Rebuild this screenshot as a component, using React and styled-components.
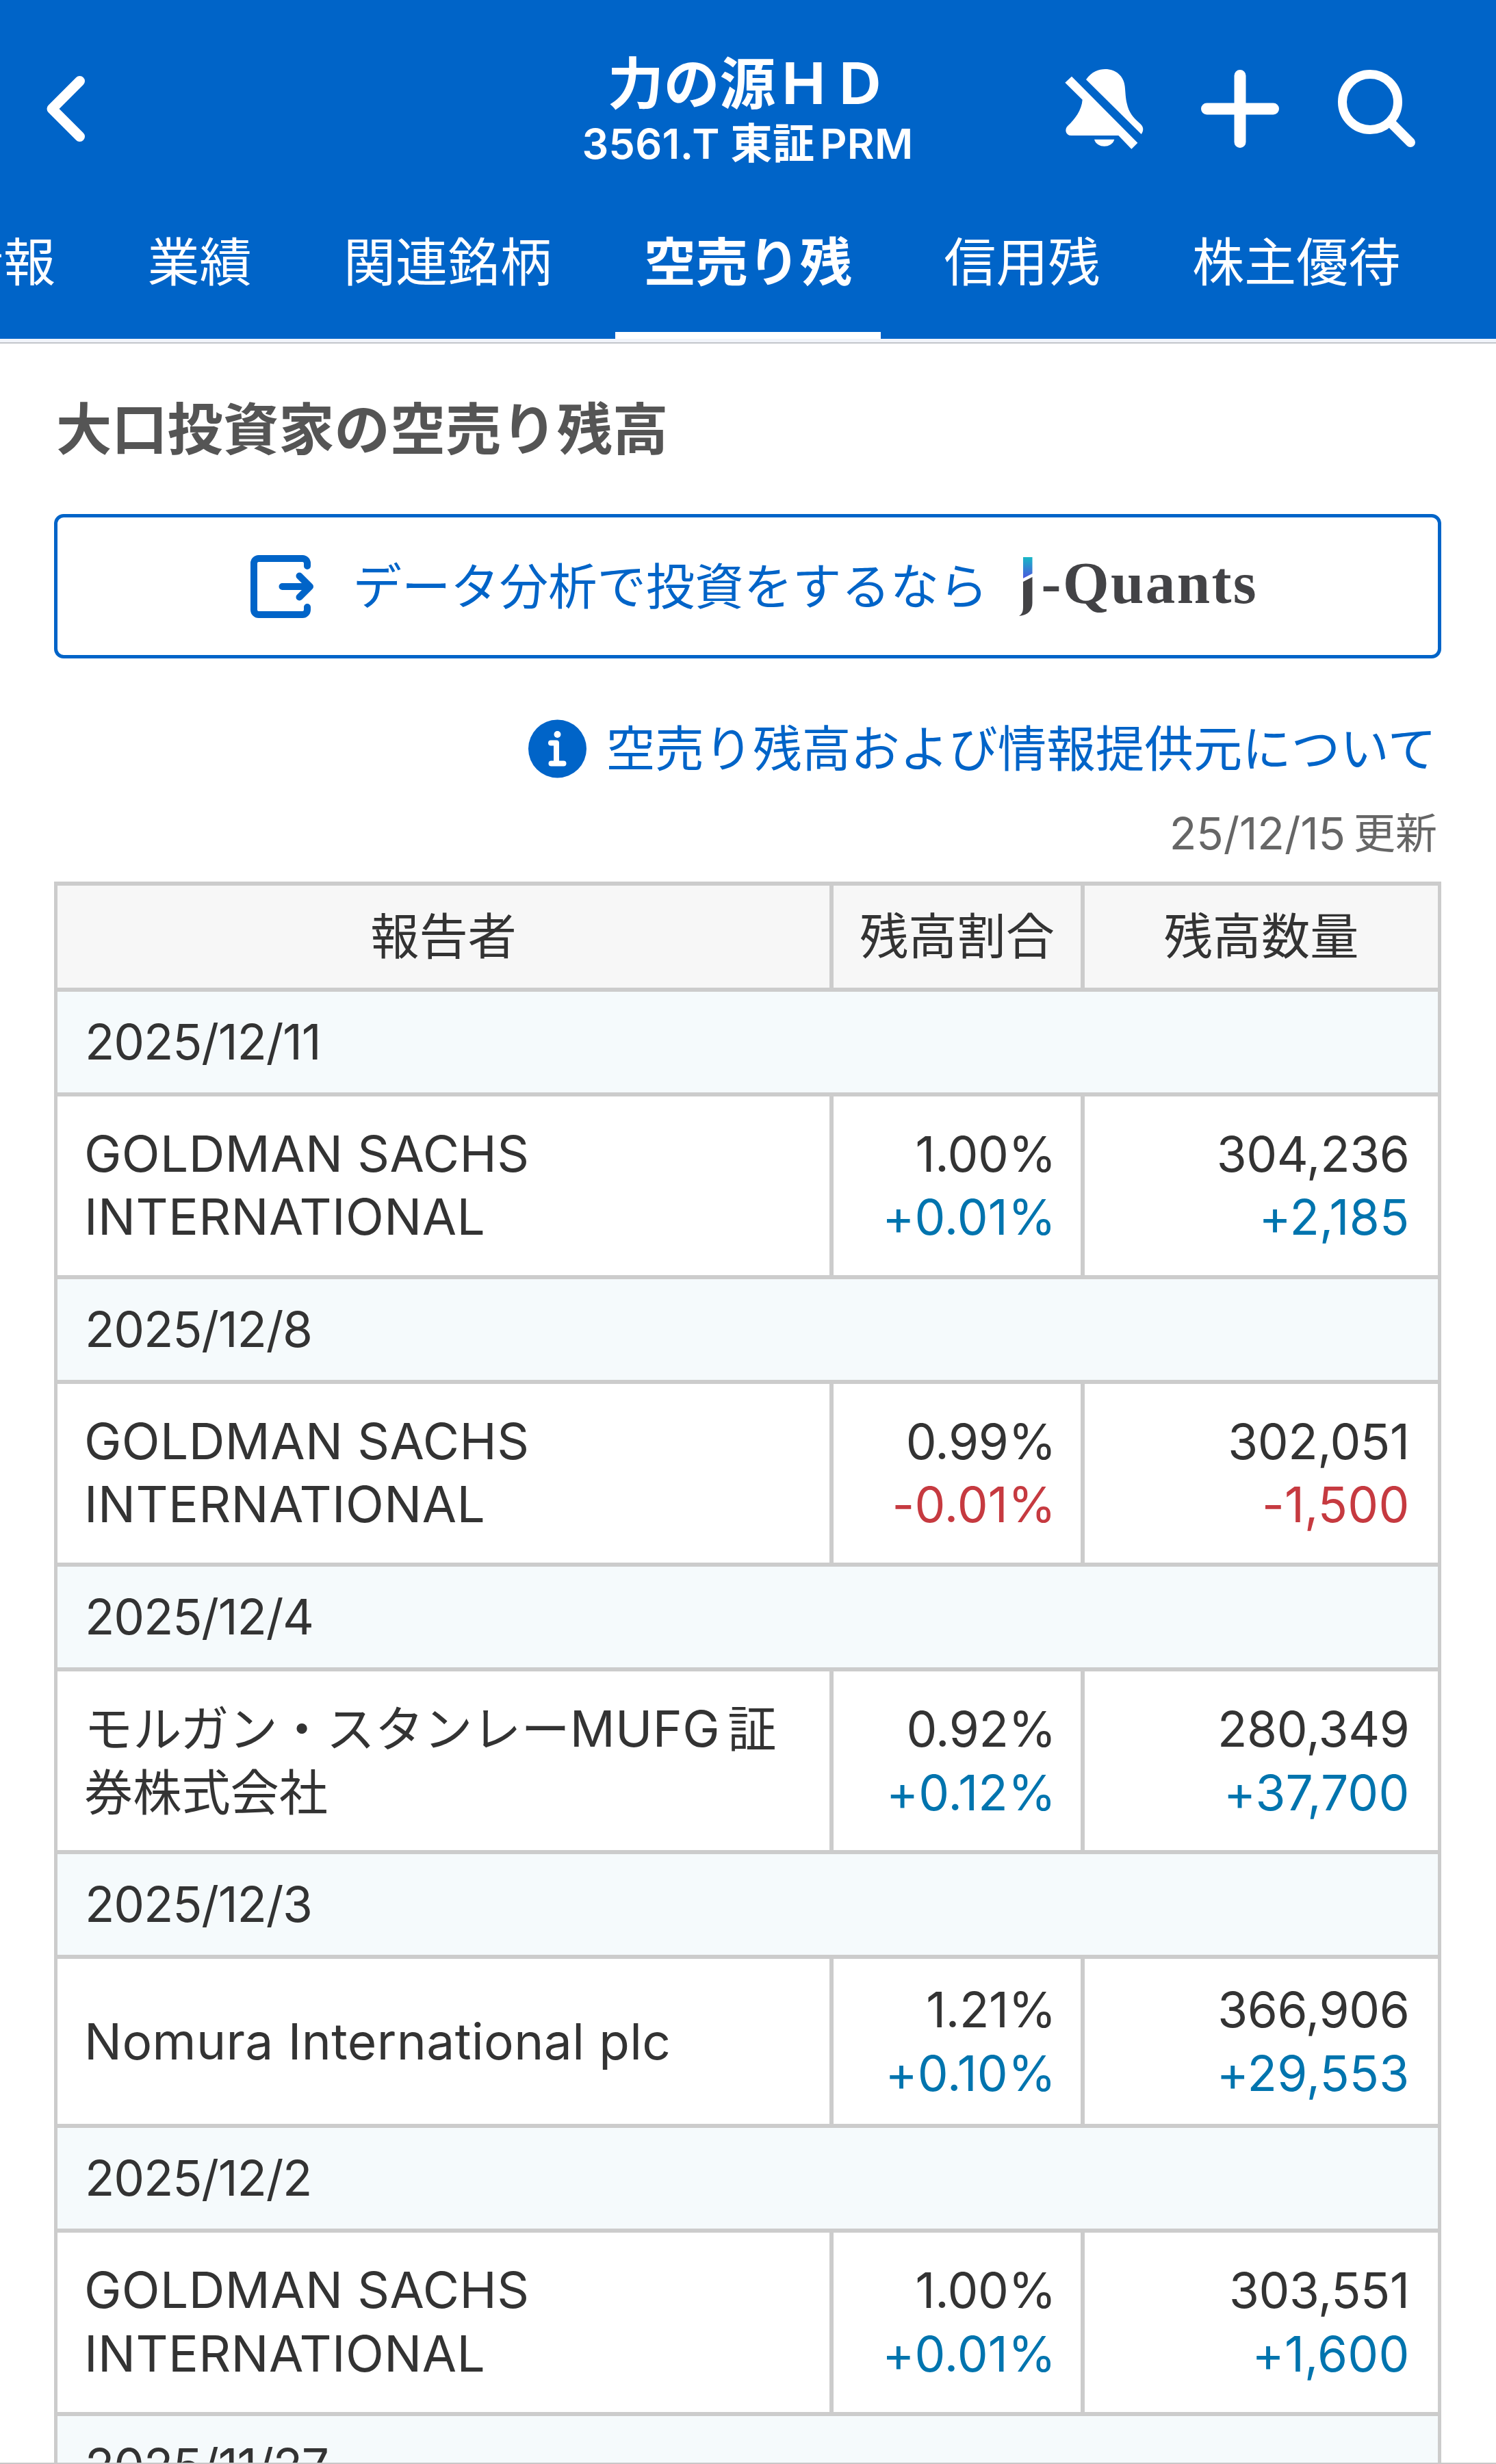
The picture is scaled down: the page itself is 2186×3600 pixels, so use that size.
import React from "react";
import styled, { createGlobalStyle } from "styled-components";

const tabs = ["情報", "業績", "関連銘柄", "空売り残", "信用残", "株主優待"];
const activeTab = "空売り残";

const reports = [
  {
    date: "2025/12/11",
    name: "GOLDMAN SACHS INTERNATIONAL",
    ratio: "1.00%",
    ratioDiff: "+0.01%",
    volume: "304,236",
    volumeDiff: "+2,185",
  },
  {
    date: "2025/12/8",
    name: "GOLDMAN SACHS INTERNATIONAL",
    ratio: "0.99%",
    ratioDiff: "-0.01%",
    volume: "302,051",
    volumeDiff: "-1,500",
  },
  {
    date: "2025/12/4",
    name: "モルガン・スタンレーMUFG証券株式会社",
    ratio: "0.92%",
    ratioDiff: "+0.12%",
    volume: "280,349",
    volumeDiff: "+37,700",
  },
  {
    date: "2025/12/3",
    name: "Nomura International plc",
    ratio: "1.21%",
    ratioDiff: "+0.10%",
    volume: "366,906",
    volumeDiff: "+29,553",
    compact: true,
  },
  {
    date: "2025/12/2",
    name: "GOLDMAN SACHS INTERNATIONAL",
    ratio: "1.00%",
    ratioDiff: "+0.01%",
    volume: "303,551",
    volumeDiff: "+1,600",
  },
  { date: "2025/11/27" },
];

export default function App() {
  return (
    <Page>
      <GlobalStyle />
      <Header>
        <NavBar>
          <BackIcon />
          <TitleBlock>
            <StockName>力の源ＨＤ</StockName>
            <StockCode>
              3561.T 東証<Market>PRM</Market>
            </StockCode>
          </TitleBlock>
          <Actions>
            <BellOffIcon />
            <PlusIcon />
            <SearchIcon />
          </Actions>
        </NavBar>
        <Tabs>
          {tabs.map((tab) => (
            <Tab key={tab} $active={tab === activeTab}>
              {tab}
            </Tab>
          ))}
        </Tabs>
      </Header>

      <Content>
        <Heading>大口投資家の空売り残高</Heading>

        <BannerButton>
          <ExportIcon />
          <BannerText>データ分析で投資をするなら</BannerText>
          <Logo>
            <LogoMark />
            <LogoText>-Quants</LogoText>
          </Logo>
        </BannerButton>

        <InfoLink>
          <InfoIcon />
          空売り残高および情報提供元について
        </InfoLink>
        <Updated>
          <UpdatedDate>25/12/15</UpdatedDate>
          <span>更新</span>
        </Updated>

        <Table>
          <HeadRow>
            <Cell>報告者</Cell>
            <Cell>残高割合</Cell>
            <Cell>残高数量</Cell>
          </HeadRow>
          {reports.map((report) => (
            <React.Fragment key={report.date}>
              <DateRow>{report.date}</DateRow>
              {report.name && <ReportRow report={report} />}
            </React.Fragment>
          ))}
        </Table>
      </Content>
      <BottomLine />
    </Page>
  );
}

function ReportRow({ report }) {
  return (
    <Row $compact={report.compact}>
      <NameCell>
        <ReporterName name={report.name} />
      </NameCell>
      <NumberCell $pad={36}>
        <span>{report.ratio}</span>
        <Diff $down={report.ratioDiff.startsWith("-")}>{report.ratioDiff}</Diff>
      </NumberCell>
      <NumberCell $pad={41.5}>
        <span>{report.volume}</span>
        <Diff $down={report.volumeDiff.startsWith("-")}>{report.volumeDiff}</Diff>
      </NumberCell>
    </Row>
  );
}

// latin runs are set a little larger than the kana around them
function ReporterName({ name }) {
  return (
    <div>
      {name
        .split(/([A-Za-z ]+)/)
        .filter(Boolean)
        .map((part) => (/[A-Za-z]/.test(part) ? <Latin key={part}>{part}</Latin> : part))}
    </div>
  );
}

const BackIcon = () => (
  <svg width="58" height="98" viewBox="0 0 58 98" fill="none">
    <path
      d="M49.5 8.5L9 49l40.5 40.5"
      stroke="#fff"
      strokeWidth="15"
      strokeLinecap="round"
      strokeLinejoin="round"
    />
  </svg>
);

const BellOffIcon = () => (
  <svg width="160" height="160" viewBox="0 0 480 480" fill="#fff">
    <path d="M159 112C183 77 215 66 243 66c46 0 82 30 86 76 3 30 3 50 9 75 8 38 27 62 59 89 15 13 15 31 4 45z" />
    <path d="M67 125l29-27 289 291-27 27-57-59H94c-25 0-31-28-15-43 32-29 61-70 64-114z" />
    <path d="M195 374h88c-11 40-77 40-88 0z" />
  </svg>
);

const PlusIcon = () => (
  <svg width="114" height="114" viewBox="0 0 114 114" fill="none">
    <path d="M57 8.5v97M8.5 57h97" stroke="#fff" strokeWidth="17" strokeLinecap="round" />
  </svg>
);

const SearchIcon = () => (
  <svg width="114" height="114" viewBox="0 0 114 114" fill="none" stroke="#fff">
    <circle cx="47" cy="47" r="40.5" strokeWidth="13" />
    <path d="M78 78l28 28" strokeWidth="14" strokeLinecap="round" />
  </svg>
);

const ExportIcon = () => (
  <svg width="94" height="92" viewBox="0 0 94 92" fill="none" stroke="#0064c8">
    <path
      d="M83 16V12a7 7 0 0 0-7-7H12a7 7 0 0 0-7 7v68a7 7 0 0 0 7 7h64a7 7 0 0 0 7-7v-4"
      strokeWidth="10"
      strokeLinecap="round"
    />
    <path
      d="M46.5 46H87M71.5 30.5L87 46 71.5 61.5"
      strokeWidth="10"
      strokeLinecap="round"
      strokeLinejoin="round"
    />
  </svg>
);

const InfoIcon = () => (
  <svg width="85" height="86" viewBox="0 0 85 86">
    <circle cx="42.5" cy="43" r="42.5" fill="#0064c8" />
    <circle cx="42.5" cy="22" r="5" fill="#fff" />
    <path
      d="M33 34.5h8v30M33.5 64.5h18"
      fill="none"
      stroke="#fff"
      strokeWidth="8"
      strokeLinecap="round"
      strokeLinejoin="round"
    />
  </svg>
);

const LogoMark = () => (
  <svg width="20" height="87" viewBox="0 0 20 87">
    <defs>
      <linearGradient id="mark" x1="0" y1="0" x2="0" y2="1">
        <stop offset="0" stopColor="#18b8c6" />
        <stop offset="1" stopColor="#4d56de" />
      </linearGradient>
    </defs>
    <path d="M6 0h13.5v24L6 31z" fill="url(#mark)" />
    <path d="M6 36l13.5-7v38c0 10-6 18-19.5 19 5-3 6-7 6-14z" fill="#434346" />
  </svg>
);

const GlobalStyle = createGlobalStyle`
  body {
    margin: 0;
    background: #fff;
    font-family: Inter, "Noto Sans CJK JP", sans-serif;
    color: #333;
  }
  * {
    box-sizing: border-box;
  }
  svg {
    display: block;
    flex: none;
  }
`;

const Page = styled.div`
  display: flex;
  flex-direction: column;
  width: 2186px;
  height: 3600px;
  overflow: hidden;
`;

const Header = styled.header`
  flex: none;
  height: 502px;
  background: #0064c8;
  color: #fff;
  border-bottom: 2px solid #c3c6cb;
  box-shadow: inset 0 -5px #f1f4fa;
`;

const NavBar = styled.div`
  display: grid;
  grid-template-columns: 1fr auto 1fr;
  align-items: center;
  height: 317px;
  padding: 0 117px 0 67px;
`;

const TitleBlock = styled.div`
  display: flex;
  flex-direction: column;
  align-items: center;
  margin: 15px 0 0 49px;
`;

const StockName = styled.div`
  font-size: 81.8px;
  line-height: 88px;
  font-weight: 600;
`;

const StockCode = styled.div`
  font-size: 61px;
  line-height: 86px;
  font-weight: 600;
  letter-spacing: 0.3px;
  white-space: nowrap;
`;

const Market = styled.span`
  margin-left: 8px;
`;

const Actions = styled.div`
  display: flex;
  align-items: center;
  justify-content: flex-end;

  svg:nth-child(2) {
    margin: 0 86px 0 61px;
  }
`;

const Tabs = styled.nav`
  display: flex;
  gap: 50.3px;
  height: 178px;
  margin-left: -113px;
`;

const Tab = styled.div`
  flex: none;
  padding: 28px 42px 0;
  font-size: 76.1px;
  line-height: 76px;
  font-weight: ${(props) => (props.$active ? 700 : 400)};
  border-bottom: 10px solid ${(props) => (props.$active ? "#fff" : "transparent")};
`;

const Content = styled.main`
  flex: 1;
  min-height: 0;
  padding: 84px 80px 0 79px;
  overflow: hidden;
`;

const Heading = styled.h2`
  margin: 0 0 82px 3px;
  padding-top: 1px;
  font-size: 81.3px;
  line-height: 82px;
  font-weight: 700;
  color: #555;
`;

const BannerButton = styled.div`
  display: flex;
  align-items: center;
  height: 211px;
  padding-left: 281.5px;
  border: 5px solid #0064c8;
  border-radius: 14px;
  color: #0064c8;
`;

const BannerText = styled.span`
  margin: 0 45px 0 56px;
  font-size: 71.4px;
  line-height: 72px;
  white-space: nowrap;
`;

const Logo = styled.div`
  display: flex;
  align-items: center;
  gap: 13px;
  padding-top: 2px;
`;

const LogoText = styled.span`
  margin-bottom: 12px;
  font-family: "Liberation Serif", serif;
  font-weight: 700;
  font-size: 87px;
  line-height: 87px;
  letter-spacing: 2.4px;
  color: #434346;
`;

const InfoLink = styled.div`
  display: flex;
  align-items: center;
  justify-content: flex-end;
  gap: 29px;
  height: 86px;
  margin-top: 89px;
  padding-right: 7px;
  font-size: 71.5px;
  line-height: 86px;
  color: #0064c8;
`;

const Updated = styled.div`
  display: flex;
  justify-content: flex-end;
  gap: 12px;
  margin: 45px 0 34px;
  padding-right: 6px;
  font-size: 61px;
  line-height: 72px;
  color: #666;
`;

const UpdatedDate = styled.span`
  font-size: 65px;
  letter-spacing: -0.1px;
`;

const Table = styled.div`
  border: 6px solid #ccc;
  border-width: 0 5px;
  font-size: 71.2px;
`;

const Row = styled.div`
  display: grid;
  grid-template-columns: 1128px 367px 1fr;
  height: ${(props) => (props.$compact ? 247 : 267.25)}px;
  border-top: 6px solid #ccc;
`;

const Cell = styled.div`
  display: flex;
  align-items: center;
  justify-content: center;
  line-height: 92px;

  & + & {
    border-left: 6px solid #ccc;
  }
`;

const HeadRow = styled(Row)`
  height: 154.5px;
  background: #f7f7f7;
`;

const DateRow = styled.div`
  height: 153px;
  padding-left: 40px;
  border-top: 6px solid #ccc;
  background: #f5fafc;
  line-height: 147px;
  letter-spacing: -1.2px;
`;

const NameCell = styled.div`
  display: flex;
  align-items: center;
  padding: 0 30px 0 39px;
  line-height: 92.5px;
`;

const Latin = styled.span`
  margin-right: 11px;
  font-size: 73px;
  letter-spacing: 0.4px;
`;

const NumberCell = styled.div`
  display: flex;
  flex-direction: column;
  align-items: flex-end;
  justify-content: center;
  padding-right: ${(props) => props.$pad}px;
  border-left: 6px solid #ccc;
  line-height: 92.5px;
  letter-spacing: -0.4px;
`;

const Diff = styled.span`
  color: ${(props) => (props.$down ? "#c63a40" : "#0074ae")};
  letter-spacing: 0.2px;
`;

const BottomLine = styled.div`
  flex: none;
  height: 2px;
  background: #c8c8c8;
`;
